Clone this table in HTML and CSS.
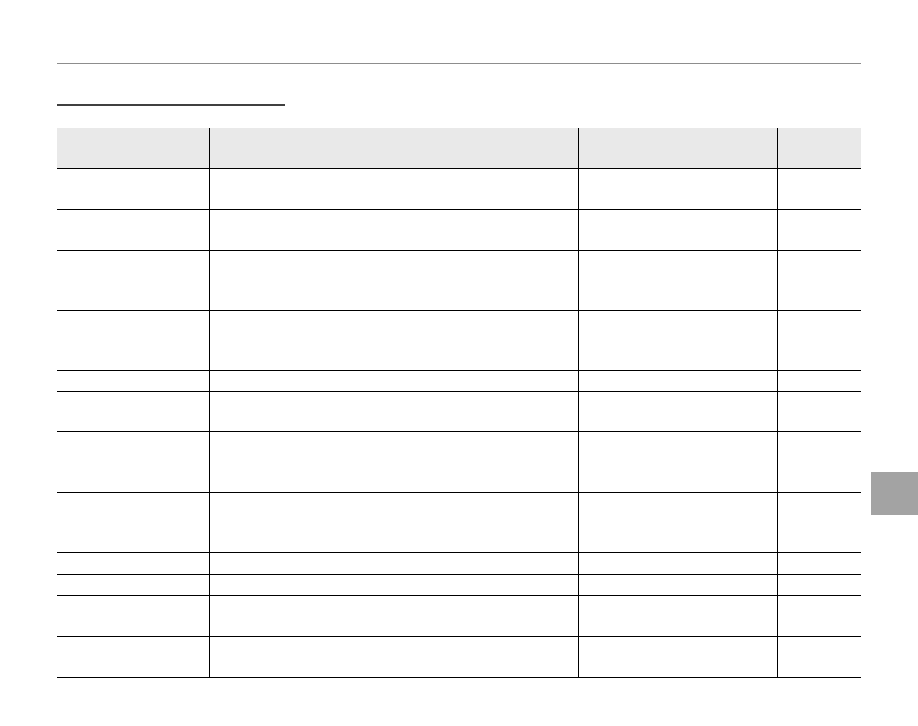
FILE: index.html
```html
<!DOCTYPE html>
<html lang="en">
<head>
<meta charset="utf-8">
<title>Table</title>
<link rel="stylesheet" href="styles.css">
</head>
<body>
<div class="page">
  <div class="top-rule"></div>
  <div class="section-title"></div>
  <div class="grid">
    <div class="row head"><div class="c c1"></div><div class="c c2"></div><div class="c c3"></div><div class="c c4"></div></div>
    <div class="row h41"><div class="c c1"></div><div class="c c2"></div><div class="c c3"></div><div class="c c4"></div></div>
    <div class="row h41"><div class="c c1"></div><div class="c c2"></div><div class="c c3"></div><div class="c c4"></div></div>
    <div class="row h60"><div class="c c1"></div><div class="c c2"></div><div class="c c3"></div><div class="c c4"></div></div>
    <div class="row h60"><div class="c c1"></div><div class="c c2"></div><div class="c c3"></div><div class="c c4"></div></div>
    <div class="row h21"><div class="c c1"></div><div class="c c2"></div><div class="c c3"></div><div class="c c4"></div></div>
    <div class="row h40"><div class="c c1"></div><div class="c c2"></div><div class="c c3"></div><div class="c c4"></div></div>
    <div class="row h61"><div class="c c1"></div><div class="c c2"></div><div class="c c3"></div><div class="c c4"></div></div>
    <div class="row h60"><div class="c c1"></div><div class="c c2"></div><div class="c c3"></div><div class="c c4"></div></div>
    <div class="row h22"><div class="c c1"></div><div class="c c2"></div><div class="c c3"></div><div class="c c4"></div></div>
    <div class="row h21"><div class="c c1"></div><div class="c c2"></div><div class="c c3"></div><div class="c c4"></div></div>
    <div class="row h41"><div class="c c1"></div><div class="c c2"></div><div class="c c3"></div><div class="c c4"></div></div>
    <div class="row h41"><div class="c c1"></div><div class="c c2"></div><div class="c c3"></div><div class="c c4"></div></div>
  </div>
</div>
<div class="side-tab"></div>
</body>
</html>
```

FILE: styles.css
```css
html, body {
  margin: 0;
  padding: 0;
  background: #ffffff;
  font-family: "Liberation Sans", Arial, sans-serif;
}
.page {
  width: 804px;
  padding: 63px 57px 0 57px;
}
.top-rule {
  height: 1px;
  background: #8d8d8d;
}
.section-title {
  margin-top: 40px;
  width: 228px;
  height: 2px;
  background: #404040;
}
.grid {
  margin-top: 22px;
  display: flex;
  flex-direction: column;
}
.row {
  display: flex;
  box-sizing: border-box;
  border-bottom: 1px solid #000;
}
.row.head {
  height: 41px;
  background: #e9e9e9;
}
.h21 { height: 21px; }
.h22 { height: 22px; }
.h40 { height: 40px; }
.h41 { height: 41px; }
.h60 { height: 60px; }
.h61 { height: 61px; }
.c {
  box-sizing: border-box;
}
.c1 { width: 152px; }
.c2 { width: 369px; border-left: 1px solid #000; }
.c3 { width: 199px; border-left: 1px solid #000; }
.c4 { width: 84px; border-left: 1px solid #000; }
.side-tab {
  position: absolute;
  left: 871px;
  top: 472px;
  width: 47px;
  height: 43px;
  background: #a3a3a3;
}
```
